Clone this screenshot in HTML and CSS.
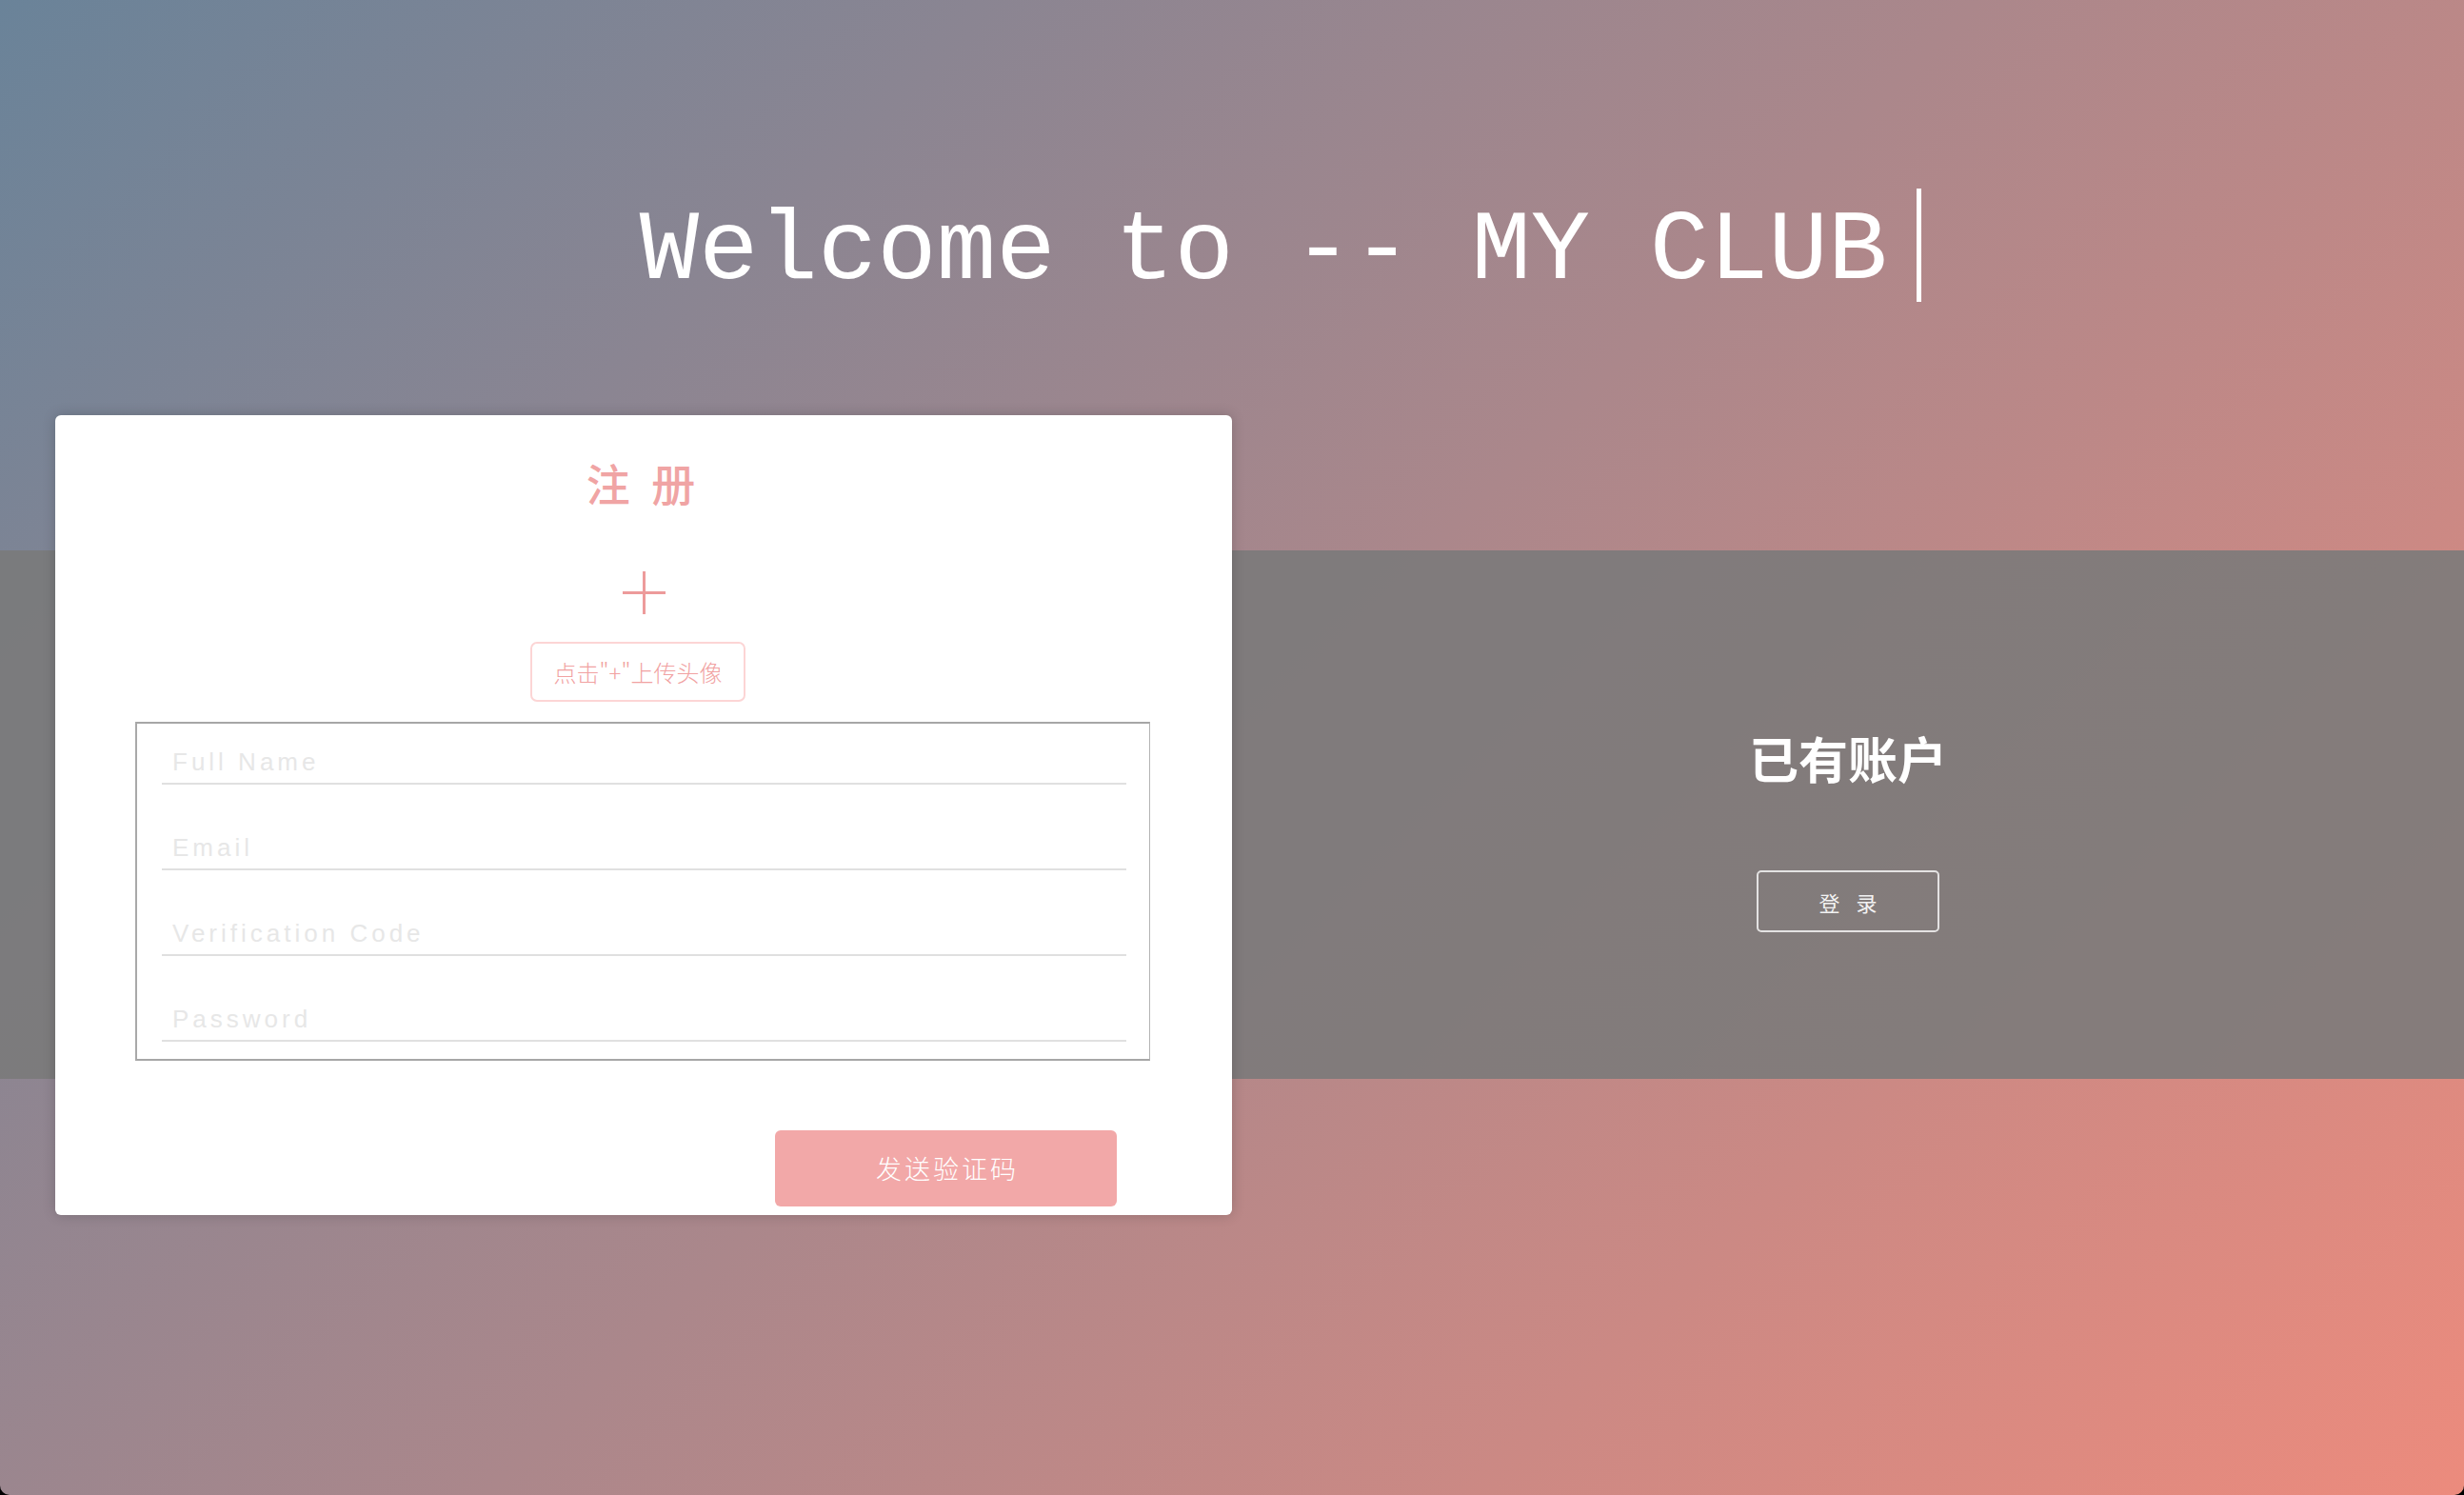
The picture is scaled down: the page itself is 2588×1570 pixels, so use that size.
FILE: index.html
```html
<!DOCTYPE html>
<html lang="zh-CN">
<head>
<meta charset="utf-8">
<title>MY CLUB</title>
<link rel="stylesheet" href="styles.css">
</head>
<body>
<div class="page">
  <header class="hero">
    <h1 class="typing">Welcome to -- MY CLUB</h1>
  </header>
  <section class="band">
    <div class="card">
      <h2 class="card-title">注 册</h2>
      <div class="avatar-plus">
        <svg width="45" height="45" viewBox="0 0 45 45" aria-hidden="true"><path d="M22.5 0V45M0 22.5H45" stroke="#ed9b9b" stroke-width="3" fill="none"/></svg>
      </div>
      <button class="upload-btn" type="button">点击"+"上传头像</button>
      <fieldset class="fields">
        <input type="text" placeholder="Full Name">
        <input type="email" placeholder="Email">
        <input type="text" placeholder="Verification Code">
        <input type="password" placeholder="Password">
      </fieldset>
      <div class="actions">
        <button class="send-btn" type="button">发送验证码</button>
      </div>
    </div>
    <div class="aside">
      <h2 class="aside-title">已有账户</h2>
      <button class="login-btn" type="button">登 录</button>
    </div>
  </section>
</div>
</body>
</html>
```
FILE: styles.css
```css
html {
  background: #000;
}
body {
  margin: 0;
  font-family: "Liberation Sans", "Noto Sans CJK SC", sans-serif;
}
.page {
  height: 1570px;
  overflow: hidden;
  background: linear-gradient(135deg, #6a8399 0%, #ec8b7d 100%);
  border-radius: 0 0 10px 10px;
}
.hero {
  display: flex;
  justify-content: center;
  padding: 198px 0 0 102px;
}
.typing {
  margin: 0;
  font-family: "Liberation Mono", monospace;
  font-size: 104px;
  font-weight: normal;
  line-height: 105px;
  padding: 14px 31px 0 0;
  border-right: 5px solid #fff;
  color: #fff;
  white-space: nowrap;
}
.band {
  margin-top: 261px;
  height: 555px;
  display: flex;
  align-items: center;
  background: rgba(122, 122, 122, 0.885);
}
.card {
  flex: 0 0 1236px;
  height: 840px;
  margin-left: 58px;
  box-sizing: border-box;
  background: #fff;
  border-radius: 6px;
  box-shadow: 0 0 14px rgba(0, 0, 0, 0.18);
  display: flex;
  flex-direction: column;
  align-items: center;
  padding-top: 47px;
  font-family: "Noto Sans CJK SC", sans-serif;
}
.card-title {
  margin: 0;
  font-size: 46px;
  line-height: 46px;
  font-weight: 500;
  letter-spacing: 6px;
  color: #f0a4a4;
}
.avatar-plus {
  margin-top: 71px;
  width: 45px;
  height: 45px;
}
.avatar-plus svg {
  display: block;
}
.upload-btn {
  margin-top: 29px;
  margin-right: 12px;
  width: 226px;
  height: 63px;
  box-sizing: border-box;
  border: 2px solid #fcd5d5;
  border-radius: 7px;
  background: #fff;
  color: #f1a2a2;
  font-family: "Noto Sans CJK SC", sans-serif;
  font-weight: 300;
  font-size: 24px;
  padding: 0;
}
.fields {
  align-self: stretch;
  margin: 21px 86px 0 84px;
  padding: 4px 24px 18px 26px;
  border-style: solid;
  border-width: 2px 1px 2px 2px;
  border-color: #a6a6a6 #b4b4b4 #a6a6a6 #a9a9a9;
  min-width: 0;
}
.fields input {
  display: block;
  width: 100%;
  height: 60px;
  box-sizing: border-box;
  margin: 30px 0 0;
  border: none;
  border-bottom: 2px solid #e0e0e0;
  padding: 15px 0 0 11px;
  font-family: "Liberation Sans", sans-serif;
  font-size: 26px;
  letter-spacing: 4px;
  color: #555;
  background: transparent;
  outline: none;
}
.fields input:first-child {
  margin-top: 0;
}
.fields input::placeholder {
  color: #e7e7e7;
}
.actions {
  align-self: stretch;
  display: flex;
  justify-content: flex-end;
  margin-top: 73px;
  padding-right: 121px;
}
.send-btn {
  width: 359px;
  height: 80px;
  border: none;
  border-radius: 6px;
  background: #f2a8a8;
  color: #fff;
  font-family: "Noto Sans CJK SC", sans-serif;
  font-weight: 300;
  font-size: 27px;
  letter-spacing: 3px;
  padding: 0 0 0 3px;
}
.aside {
  flex: 1;
  align-self: stretch;
  display: flex;
  flex-direction: column;
  align-items: center;
  padding-top: 192px;
  font-family: "Noto Sans CJK SC", sans-serif;
}
.aside-title {
  margin: 0;
  font-size: 52px;
  line-height: 52px;
  font-weight: bold;
  color: #fff;
}
.login-btn {
  margin-top: 92px;
  width: 192px;
  height: 65px;
  box-sizing: border-box;
  border: 2px solid rgba(255, 255, 255, 0.78);
  border-radius: 5px;
  background: transparent;
  color: #f2f2f2;
  font-family: "Noto Sans CJK SC", sans-serif;
  font-size: 22px;
  letter-spacing: 6px;
  padding: 0 0 0 6px;
}
```
